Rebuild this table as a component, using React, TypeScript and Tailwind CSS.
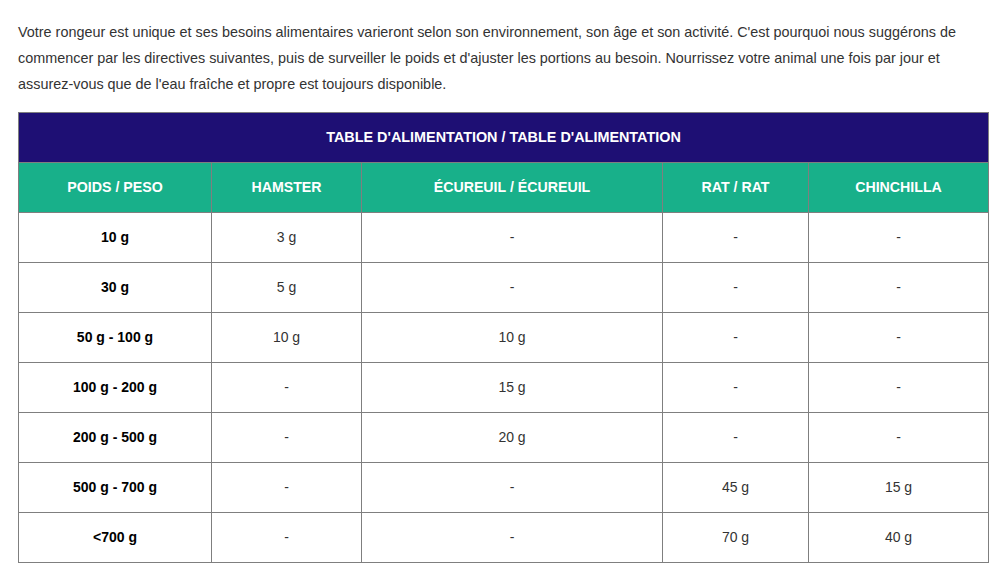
import React from "react";

const rows: string[][] = [
  ["10 g", "3 g", "-", "-", "-"],
  ["30 g", "5 g", "-", "-", "-"],
  ["50 g - 100 g", "10 g", "10 g", "-", "-"],
  ["100 g - 200 g", "-", "15 g", "-", "-"],
  ["200 g - 500 g", "-", "20 g", "-", "-"],
  ["500 g - 700 g", "-", "-", "45 g", "15 g"],
  ["<700 g", "-", "-", "70 g", "40 g"],
];

const headers = ["POIDS / PESO", "HAMSTER", "ÉCUREUIL / ÉCUREUIL", "RAT / RAT", "CHINCHILLA"];

export default function App() {
  return (
    <div className="bg-white w-[1002px] h-[583px] px-[18px] pt-[19px]" style={{ fontFamily: '"Liberation Sans", Arial, sans-serif' }}>
      <p className="text-[14.4px] leading-[26px] text-[#333333] w-[969px]">
        Votre rongeur est unique et ses besoins alimentaires varieront selon son environnement, son âge et son activité. C'est pourquoi nous suggérons de commencer par les directives suivantes, puis de surveiller le poids et d'ajuster les portions au besoin. Nourrissez votre animal une fois par jour et assurez-vous que de l'eau fraîche et propre est toujours disponible.
      </p>
      <table className="mt-[15px] w-[970px] border-collapse table-fixed text-[14px]">
        <colgroup>
          <col className="w-[193px]" />
          <col className="w-[150px]" />
          <col className="w-[301px]" />
          <col className="w-[146px]" />
          <col className="w-[180px]" />
        </colgroup>
        <thead>
          <tr className="h-[50px]">
            <th colSpan={5} className="bg-[#1e0f74] text-white font-bold text-center text-[14.4px] border border-[#7f7f7f] p-0">
              TABLE D'ALIMENTATION / TABLE D'ALIMENTATION
            </th>
          </tr>
          <tr className="h-[50px]">
            {headers.map((h) => (
              <th key={h} className="bg-[#18b08a] text-white font-bold text-center text-[14.2px] border border-[#7f7f7f] p-0">
                {h}
              </th>
            ))}
          </tr>
        </thead>
        <tbody>
          {rows.map((r, i) => (
            <tr key={i} className="h-[50px]">
              {r.map((c, j) => (
                <td
                  key={j}
                  className={
                    j === 0
                      ? "text-center border border-[#7f7f7f] p-0 font-bold text-black"
                      : "text-center border border-[#7f7f7f] p-0 text-[#333333]"
                  }
                >
                  {c}
                </td>
              ))}
            </tr>
          ))}
        </tbody>
      </table>
    </div>
  );
}
